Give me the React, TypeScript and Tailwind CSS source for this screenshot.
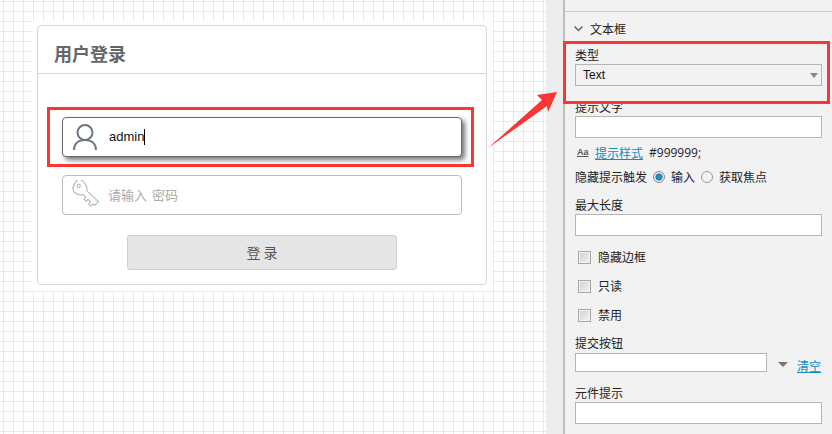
const font = "font-['Noto_Sans_CJK_SC','Noto_Sans',sans-serif]";

function Label({ children, className = "" }: { children: React.ReactNode; className?: string }) {
  return <div className={`h-[18px] leading-[18px] text-[12px] text-[#222] ${className}`}>{children}</div>;
}

function Field({ className = "" }: { className?: string }) {
  return <div className={`h-[22px] border border-[#b5b5b5] bg-white ${className}`} />;
}

function Check({ label, className = "" }: { label: string; className?: string }) {
  return (
    <div className={`h-[18px] flex items-center pl-[3px] ${className}`}>
      <span className="w-[13px] h-[13px] border border-[#a8a8a8] bg-[linear-gradient(135deg,#cfcfcf,#f4f4f4)] shadow-[inset_0_0_0_1px_#f2f2f2]" />
      <span className="ml-[7px] text-[12px] text-[#222] leading-[18px]">{label}</span>
    </div>
  );
}

function UserIcon() {
  return (
    <svg width="26" height="28" viewBox="0 0 26 28" fill="none" stroke="#6c7680" strokeWidth="2">
      <circle cx="13" cy="9.5" r="7.5" />
      <path d="M2 27 C2 20.5 6.5 17 13 17 C19.5 17 24 20.5 24 27" />
    </svg>
  );
}

function KeyIcon() {
  return (
    <svg width="30" height="30" viewBox="0 0 30 30" fill="none" stroke="#bdbdbd" strokeWidth="1.2">
      <g transform="translate(8.5 8) rotate(43)">
        <path d="M-7 -4 C-7 -7 -3 -8 1 -7 C4 -6.5 6 -5 7 -3 L23 -3 L23 2.5 L20.5 2.5 L20.5 5.5 L17.5 5.5 L17.5 2.5 L14 2.5 L14 5 L11 5 L11 2.5 L7 2.5 C5.5 5 3 6.5 0 6.5 C-4 6.5 -7 3 -7 -4 Z" />
        <circle cx="-2" cy="-1" r="1.6" />
      </g>
    </svg>
  );
}

export default function App() {
  return (
    <div className={`relative flex w-[832px] h-[434px] overflow-hidden bg-white ${font}`}>
      {/* canvas */}
      <div className="w-[546px] h-full pl-[31px] pt-[21px] bg-white bg-[linear-gradient(to_right,#d9eef6_1px,transparent_1px),linear-gradient(to_bottom,#d9eef6_1px,transparent_1px)] bg-[size:10px_10px] bg-[position:3px_1px]">
        <div className="w-[462px] h-[270px] bg-white px-[6px] pt-[4px]">
          <div className="w-[450px] h-[260px] border border-[#d6d6d6] rounded-[4px] bg-white">
            <div className="h-[48px] border-b border-[#d6d6d6] pl-[16px] flex items-center">
              <span className="text-[18px] font-bold text-[#666] leading-[24px] mt-[6px]">用户登录</span>
            </div>
            <div className="flex flex-col px-[24px] pt-[43px]">
              <div className="h-[40px] w-[400px] flex items-center border border-[#6a6a6a] rounded-[4px] bg-white shadow-[3px_3px_5px_rgba(0,0,0,0.55)] pl-[9px]">
                <UserIcon />
                <span className="ml-[11px] text-[13px] text-[#111] font-['Liberation_Sans',sans-serif]">admin</span>
                <span className="w-px h-[16px] bg-black" />
              </div>
              <div className="h-[40px] w-[400px] mt-[18px] flex items-center border border-[#bdbdbd] rounded-[4px] bg-white pl-[8px]">
                <KeyIcon />
                <span className="ml-[7px] text-[13px] text-[#aaa] [word-spacing:2px]">请输入 密码</span>
              </div>
              <button className="self-center w-[270px] h-[35px] mt-[20px] border border-[#cfcfcf] rounded-[3px] bg-[#e5e5e5] text-[14px] text-[#555]">
                登 录
              </button>
            </div>
          </div>
        </div>
      </div>

      {/* gutter */}
      <div className="w-[17px] h-full bg-[#ededed]" />

      {/* property panel */}
      <div className="w-[269px] h-full border-l-2 border-[#bdbdbd] bg-[#f2f2f2]">
        <div className="h-[12px] border-b border-[#cfcfcf]" />
        <div className="px-[10px]">
          <div className="h-[34px] flex items-center">
            <svg width="9" height="6" viewBox="0 0 9 6" fill="none" stroke="#666" strokeWidth="1.5" className="ml-[-1px]">
              <path d="M0.5 0.5 L4.5 4.5 L8.5 0.5" />
            </svg>
            <span className="ml-[7px] text-[12px] text-[#222]">文本框</span>
          </div>
          <Label>类型</Label>
          <div className="h-[22px] border border-[#b5b5b5] flex items-center justify-between pl-[7px] pr-[3px] text-[12px] text-[#111] font-['Liberation_Sans',sans-serif]">
            <span>Text</span>
            <span className="w-0 h-0 border-x-[4px] border-x-transparent border-t-[5px] border-t-[#888]" />
          </div>
          <Label className="mt-[12px]">提示文字</Label>
          <Field />
          <div className="h-[18px] mt-[6px] flex items-center text-[12px]">
            <span className="ml-[2px] w-[14px] text-[9px] font-bold text-[#555] underline font-['Liberation_Sans',sans-serif]">Aa</span>
            <span className="ml-[4px] text-[#0f8fbe] underline">提示样式</span>
            <span className="ml-[6px] text-[#222] font-['Open_Sans',sans-serif]">#999999;</span>
          </div>
          <div className="h-[18px] mt-[6px] flex items-center text-[12px] text-[#222]">
            <span>隐藏提示触发</span>
            <span className="ml-[6px] w-[12px] h-[12px] rounded-full border border-[#8a8a8a] bg-[radial-gradient(circle,#1e9fd6_0%,#1a7fb0_45%,#e8e8e8_55%)]" />
            <span className="ml-[6px]">输入</span>
            <span className="ml-[6px] w-[12px] h-[12px] rounded-full border border-[#9a9a9a] bg-[#f4f4f4]" />
            <span className="ml-[6px]">获取焦点</span>
          </div>
          <Label className="mt-[10px]">最大长度</Label>
          <Field />
          <Check label="隐藏边框" className="mt-[12px]" />
          <Check label="只读" className="mt-[11px]" />
          <Check label="禁用" className="mt-[11px]" />
          <Label className="mt-[10px]">提交按钮</Label>
          <div className="flex items-center mt-[1px] h-[19px]">
            <div className="w-[192px] h-[19px] border border-[#b5b5b5] bg-white" />
            <span className="ml-[11px] mt-[4px] w-0 h-0 border-x-[5px] border-x-transparent border-t-[5px] border-t-[#777]" />
            <span className="ml-[9px] text-[12px] text-[#0f8fbe] underline mt-[6px]">清空</span>
          </div>
          <Label className="mt-[12px]">元件提示</Label>
          <Field />
        </div>
      </div>

      {/* annotations */}
      <div className="absolute left-[47px] top-[107px] w-[427px] h-[60px] border-[3px] border-[#fb3434]" />
      <div className="absolute left-[563px] top-[41px] w-[267px] h-[63px] border-[3px] border-[#fb3434]" />
      <svg className="absolute left-0 top-0" width="832" height="434" fill="#fb3434">
        <polygon points="488,148 542,100 537,95 557,92 548,112 547,106" />
      </svg>
    </div>
  );
}
